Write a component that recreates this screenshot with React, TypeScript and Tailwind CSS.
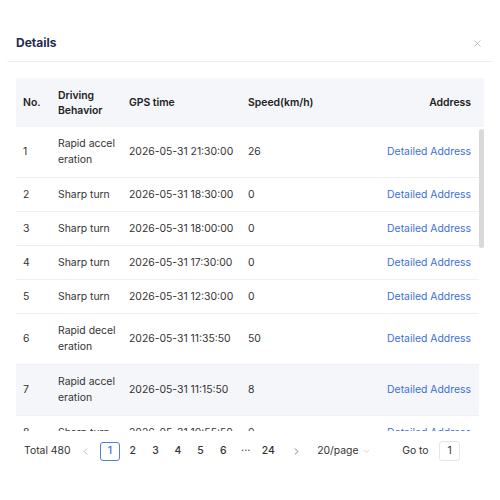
import { X, ChevronLeft, ChevronRight, ChevronDown } from "lucide-react";

type Row = { no: number; behavior: string; time: string; speed: string };

const rows: Row[] = [
  { no: 1, behavior: "Rapid acceleration", time: "2026-05-31 21:30:00", speed: "26" },
  { no: 2, behavior: "Sharp turn", time: "2026-05-31 18:30:00", speed: "0" },
  { no: 3, behavior: "Sharp turn", time: "2026-05-31 18:00:00", speed: "0" },
  { no: 4, behavior: "Sharp turn", time: "2026-05-31 17:30:00", speed: "0" },
  { no: 5, behavior: "Sharp turn", time: "2026-05-31 12:30:00", speed: "0" },
  { no: 6, behavior: "Rapid deceleration", time: "2026-05-31 11:35:50", speed: "50" },
  { no: 7, behavior: "Rapid acceleration", time: "2026-05-31 11:15:50", speed: "8" },
  { no: 8, behavior: "Sharp turn", time: "2026-05-31 10:55:50", speed: "0" },
  { no: 9, behavior: "Sharp turn", time: "2026-05-31 10:20:10", speed: "0" },
];

const cols = "grid grid-cols-[35px_71px_119px_119px_1fr]";

export default function App() {
  return (
    <div className="w-[500px] h-[500px] bg-white font-['Inter','Noto_Sans',sans-serif] text-[10.4px] text-[#333]">
      {/* Dialog header */}
      <div className="mx-[7px] flex items-center justify-between pl-[9px] pr-[10px] pt-[35px] pb-[10px] border-b border-[#eef0f3]">
        <h2 className="text-[12px] leading-4 font-bold text-[#1f2a4d]">Details</h2>
        <X className="w-[11px] h-[11px] text-[#a0a4ab]" strokeWidth={1.5} />
      </div>

      <div className="mx-4 mt-4 w-[468px]">
        {/* Table head */}
        <div className={`${cols} pr-[5px] h-[49px] items-center bg-[#f4f6fa] font-semibold text-[#222] leading-[15px] rounded-t-[2px]`}>
          <div className="px-[7px]">No.</div>
          <div className="pl-[7px] pr-[14px]">Driving Behavior</div>
          <div className="px-[7px]">GPS time</div>
          <div className="px-[7px]">Speed(km/h)</div>
          <div className="px-[8px] text-right">Address</div>
        </div>

        {/* Table body */}
        <div className="relative h-[304px] overflow-hidden">
          <div className="pr-[5px]">
            {rows.map((r) => (
              <div
                key={r.no}
                className={`${cols} items-center border-b border-[#eef0f3] leading-4 ${
                  r.behavior.length > 12 ? "h-[51px]" : "h-[34px]"
                } ${r.no === 7 ? "bg-[#f4f6fa]" : ""}`}
              >
                <div className="px-[7px]">{r.no}</div>
                <div className="pl-[7px] pr-[4px] break-all">{r.behavior}</div>
                <div className="px-[7px] whitespace-nowrap">{r.time}</div>
                <div className="px-[7px]">{r.speed}</div>
                <div className="px-[8px] text-right text-[#3d6fd6]">Detailed Address</div>
              </div>
            ))}
          </div>
          {/* scrollbar */}
          <div className="absolute right-0 top-0 h-full w-[5px]">
            <div className="mt-[2px] h-[119px] w-[5px] rounded-full bg-[#d9d9d9]" />
          </div>
        </div>

        {/* Pagination */}
        <div className="flex items-center h-[40px] pl-2 whitespace-nowrap text-[#333]">
          <span className="w-[56px]">Total 480</span>
          <ChevronLeft className="w-[11px] h-[11px] text-[#9aa0a8]" strokeWidth={1.6} />
          <div className="ml-[7.5px] flex items-center font-medium">
            <span className="w-[23px] flex justify-center">
              <span className="w-[20px] h-[19px] flex items-center justify-center rounded-[3px] border border-[#4f7fd9] text-[#3d6fd6]">1</span>
            </span>
            {["2", "3", "4", "5", "6"].map((p) => (
              <span key={p} className="w-[22.6px] text-center">{p}</span>
            ))}
            <span className="w-[22.6px] text-center text-[#555]">···</span>
            <span className="w-[22.6px] text-center">24</span>
          </div>
          <ChevronRight className="ml-[11px] w-[11px] h-[11px] text-[#555]" strokeWidth={1.6} />
          <span className="ml-[15.5px] w-[39px]">20/page</span>
          <ChevronDown className="ml-[5.5px] w-[9px] h-[9px] text-[#b5b9c0]" strokeWidth={1.6} />
          <span className="ml-[31.5px] w-[26px]">Go to</span>
          <span className="ml-[11px] w-[21px] h-[20px] flex items-center justify-center rounded-[3px] border border-[#e3e6eb]">1</span>
        </div>
      </div>
    </div>
  );
}
